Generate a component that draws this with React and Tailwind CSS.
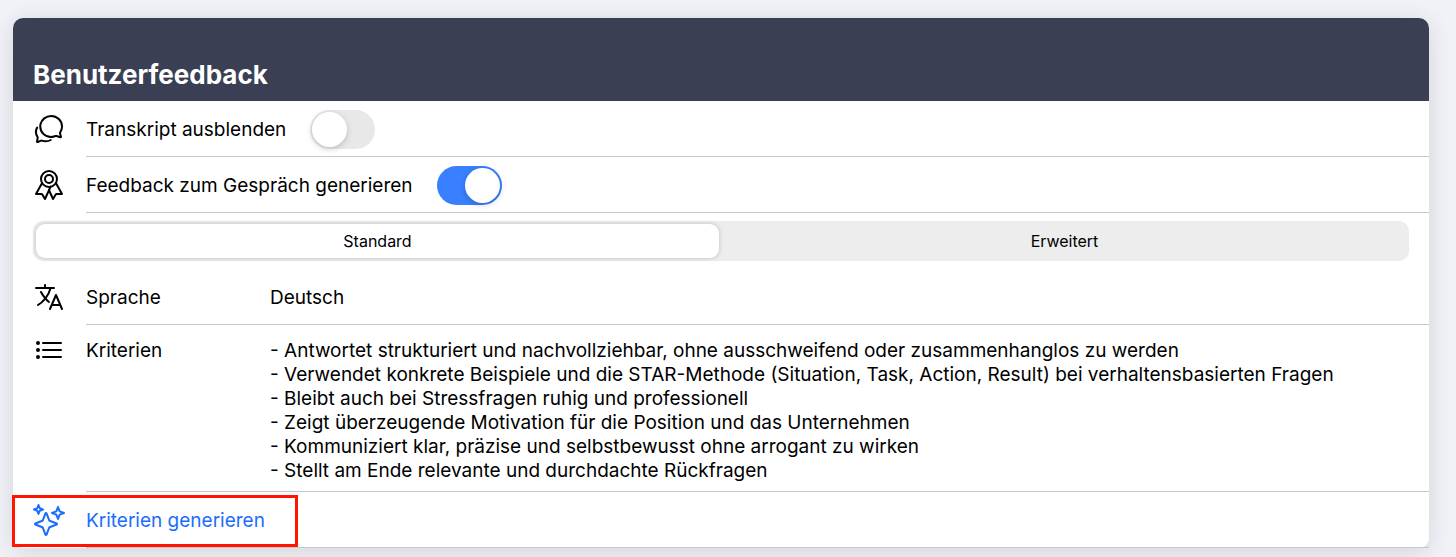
import React, { useState } from 'react';
import {
  IoChatbubblesOutline,
  IoRibbonOutline,
  IoLanguageOutline,
  IoListOutline,
  IoSparklesOutline,
} from 'react-icons/io5';

const criteria = [
  '- Antwortet strukturiert und nachvollziehbar, ohne ausschweifend oder zusammenhanglos zu werden',
  '- Verwendet konkrete Beispiele und die STAR-Methode (Situation, Task, Action, Result) bei verhaltensbasierten Fragen',
  '- Bleibt auch bei Stressfragen ruhig und professionell',
  '- Zeigt überzeugende Motivation für die Position und das Unternehmen',
  '- Kommuniziert klar, präzise und selbstbewusst ohne arrogant zu wirken',
  '- Stellt am Ende relevante und durchdachte Rückfragen',
].join('\n');

const modes = ['Standard', 'Erweitert'];

const Row = ({ icon: Icon, tall, children }) => (
  <div className="flex gap-[21px] pl-5">
    <div className={`flex w-8 shrink-0 items-center ${tall ? 'h-[50px]' : 'h-14'}`}>
      <Icon className="h-8 w-8" aria-hidden="true" />
    </div>
    <div
      className={`flex min-w-0 flex-1 border-b border-[#c8c8cb] pr-5 ${
        tall ? 'items-start pt-[14px] pb-2' : 'min-h-14 items-center pt-[2px]'
      }`}
    >
      {children}
    </div>
  </div>
);

const Toggle = ({ id, defaultChecked }) => (
  <input
    id={id}
    type="checkbox"
    role="switch"
    defaultChecked={defaultChecked}
    className="ml-6 h-[39px] w-[65px] shrink-0 cursor-pointer appearance-none rounded-full bg-[#e8e8e8] p-[2px] before:block before:h-[35px] before:w-[35px] before:rounded-full before:bg-white before:shadow-[0_2px_6px_rgba(0,0,0,0.18)] checked:bg-[#3880ff] checked:before:translate-x-[26px]"
  />
);

const App = () => {
  const [mode, setMode] = useState('Standard');

  return (
    <main className="min-h-screen bg-[#f1f2f7] pt-[18px] pr-[27px] pb-2 pl-[13px] font-['Inter',sans-serif] text-[19px] leading-6 text-black">
      <section className="relative rounded-[10px] bg-white shadow-[0_4px_24px_rgba(0,0,0,0.12)]">
        <header className="rounded-t-[10px] bg-[#3a3f53] px-5 pt-[41px] pb-[10px]">
          <h2 className="text-[26px] leading-8 font-bold text-white">Benutzerfeedback</h2>
        </header>

        <Row icon={IoChatbubblesOutline}>
          <label htmlFor="hide-transcript">Transkript ausblenden</label>
          <Toggle id="hide-transcript" />
        </Row>
        <Row icon={IoRibbonOutline}>
          <label htmlFor="generate-feedback">Feedback zum Gespräch generieren</label>
          <Toggle id="generate-feedback" defaultChecked />
        </Row>

        {/* Mode switch */}
        <div className="mx-5 my-2 flex gap-1 rounded-[10px] bg-[#ededed] p-[3px]">
          {modes.map((name) => (
            <button
              key={name}
              type="button"
              aria-pressed={mode === name}
              onClick={() => setMode(name)}
              className="h-[34px] flex-1 rounded-[9px] text-base aria-pressed:bg-white aria-pressed:shadow-[0_0_5px_rgba(0,0,0,0.2)]"
            >
              {name}
            </button>
          ))}
        </div>

        <Row icon={IoLanguageOutline}>
          <label htmlFor="language" className="w-[184px] shrink-0">Sprache</label>
          <select id="language" defaultValue="de" className="flex-1 appearance-none bg-transparent">
            <option value="de">Deutsch</option>
            <option value="en">Englisch</option>
          </select>
        </Row>
        <Row icon={IoListOutline} tall>
          <label htmlFor="criteria" className="w-[184px] shrink-0">Kriterien</label>
          <textarea
            id="criteria"
            rows={6}
            defaultValue={criteria}
            className="block flex-1 resize-none overflow-hidden bg-transparent"
          />
        </Row>

        <div className="relative text-[#1a6dff]">
          <Row icon={IoSparklesOutline}>
            <button type="button">Kriterien generieren</button>
          </Row>
          {/* Highlight frame */}
          <div className="pointer-events-none absolute top-[3px] -left-px h-[52px] w-[286px] border-3 border-[#ff1500]" />
        </div>
      </section>
    </main>
  );
};

export default App;
